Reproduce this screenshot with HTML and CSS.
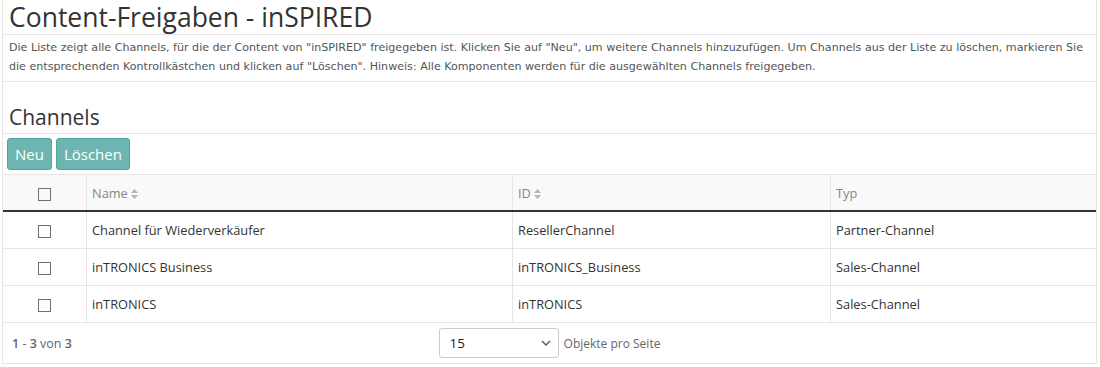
FILE: index.html
```html
<!DOCTYPE html>
<html lang="de">
<head>
  <meta charset="UTF-8">
  <title>Content-Freigaben - inSPIRED</title>
  <link rel="stylesheet" href="styles.css">
</head>
<body>
  <div class="page">

    <!-- Page title -->
    <h1 class="page-title">Content-Freigaben - inSPIRED</h1>

    <div class="intro">
      Die Liste zeigt alle Channels, für die der Content von "inSPIRED" freigegeben ist. Klicken Sie auf "Neu", um weitere Channels hinzuzufügen. Um Channels aus der Liste zu löschen, markieren Sie die entsprechenden Kontrollkästchen und klicken auf "Löschen". Hinweis: Alle Komponenten werden für die ausgewählten Channels freigegeben.
    </div>

    <h2 class="section-title">Channels</h2>

    <div class="toolbar">
      <button class="btn">Neu</button>
      <button class="btn">Löschen</button>
    </div>

    <!-- Channel table -->
    <table class="grid">
      <thead>
        <tr>
          <th class="col-check"><span class="checkbox"></span></th>
          <th class="col-name">Name <svg class="sort" width="7" height="10" viewBox="0 0 7 10"><path d="M3.5 0L7 4H0z M3.5 10L0 6h7z" fill="#b3b3b3"/></svg></th>
          <th class="col-id">ID <svg class="sort" width="7" height="10" viewBox="0 0 7 10"><path d="M3.5 0L7 4H0z M3.5 10L0 6h7z" fill="#b3b3b3"/></svg></th>
          <th class="col-type">Typ</th>
        </tr>
      </thead>
      <tbody>
        <tr>
          <td class="col-check"><span class="checkbox"></span></td>
          <td>Channel für Wiederverkäufer</td>
          <td>ResellerChannel</td>
          <td>Partner-Channel</td>
        </tr>
        <tr>
          <td class="col-check"><span class="checkbox"></span></td>
          <td>inTRONICS Business</td>
          <td>inTRONICS_Business</td>
          <td>Sales-Channel</td>
        </tr>
        <tr>
          <td class="col-check"><span class="checkbox"></span></td>
          <td>inTRONICS</td>
          <td>inTRONICS</td>
          <td>Sales-Channel</td>
        </tr>
      </tbody>
    </table>

    <!-- Paging -->
    <div class="pager">
      <div class="pager-count"><b>1</b> - <b>3</b> von <b>3</b></div>
      <div class="pager-size">
        <div class="select">
          <span>15</span>
          <svg width="10" height="6" viewBox="0 0 10 6"><path d="M1 1l4 4 4-4" fill="none" stroke="#555" stroke-width="1.4"/></svg>
        </div>
        <span class="pager-label">Objekte pro Seite</span>
      </div>
    </div>

  </div>
</body>
</html>
```

FILE: styles.css
```css
/* Reset */
body, html {
  margin: 0;
  padding: 0;
  background: #fff;
}

.page {
  margin-left: 2px;
  width: 1093px;
  border-left: 1px solid #e6e6e6;
  border-right: 1px solid #e6e6e6;
  font-family: "Open Sans", sans-serif;
  color: #333;
}

.page-title {
  margin: 0;
  height: 34px;
  padding: 0 6px;
  font-size: 26.5px;
  font-weight: normal;
  line-height: 34px;
  border-bottom: 1px solid #e6e6e6;
}

.intro {
  padding: 3px 6px 5px;
  font-family: "DejaVu Sans", Verdana, sans-serif;
  font-size: 11.1px;
  line-height: 19px;
  color: #555;
  border-bottom: 1px solid #e6e6e6;
}

.section-title {
  margin: 0;
  padding: 20px 6px 0;
  height: 31px;
  font-size: 21px;
  font-weight: normal;
  line-height: 30px;
  border-bottom: 1px solid #e6e6e6;
}

.toolbar {
  display: flex;
  gap: 4px;
  padding: 4px 4px;
}

.btn {
  height: 32px;
  padding: 0 7px;
  background: #6cb5b0;
  border: 1px solid #4fa69f;
  border-radius: 3px;
  color: #fff;
  font-family: "Open Sans", sans-serif;
  font-size: 15px;
}

/* Table */
.grid {
  width: 100%;
  border-collapse: collapse;
  font-size: 12.8px;
}

.grid th,
.grid td {
  height: 36px;
  padding: 0 5px;
  text-align: left;
  border-left: 1px solid #e6e6e6;
  border-bottom: 1px solid #e6e6e6;
}

.grid th:first-child,
.grid td:first-child {
  border-left: none;
}

.grid thead tr {
  border-top: 1px solid #e6e6e6;
}

.grid th {
  height: 35px;
  background: #f9f9f9;
  font-weight: normal;
  color: #858585;
  border-bottom: 2px solid #333;
}

.grid td {
  color: #333;
}

.col-check {
  width: 73px;
  text-align: center !important;
}

.col-name {
  width: 415px;
}

.col-id {
  width: 307px;
}

.sort {
  vertical-align: -1px;
}

.checkbox {
  display: inline-block;
  width: 11px;
  height: 11px;
  border: 1px solid #707070;
  vertical-align: middle;
}

/* Pager */
.pager {
  position: relative;
  height: 40px;
  border-bottom: 1px solid #e6e6e6;
  display: flex;
  align-items: center;
  justify-content: center;
}

.pager-count {
  position: absolute;
  left: 9px;
  top: 12px;
  font-size: 12.5px;
  color: #666;
}

.pager-count b {
  font-weight: 600;
}

.pager-size {
  display: flex;
  align-items: center;
  gap: 5px;
}

.select {
  width: 101px;
  height: 28px;
  padding: 0 7px 0 10px;
  border: 1px solid #ccc;
  border-radius: 3px;
  display: flex;
  align-items: center;
  justify-content: space-between;
  font-size: 13.5px;
  color: #222;
}

.pager-label {
  font-size: 12px;
  color: #666;
}
```
